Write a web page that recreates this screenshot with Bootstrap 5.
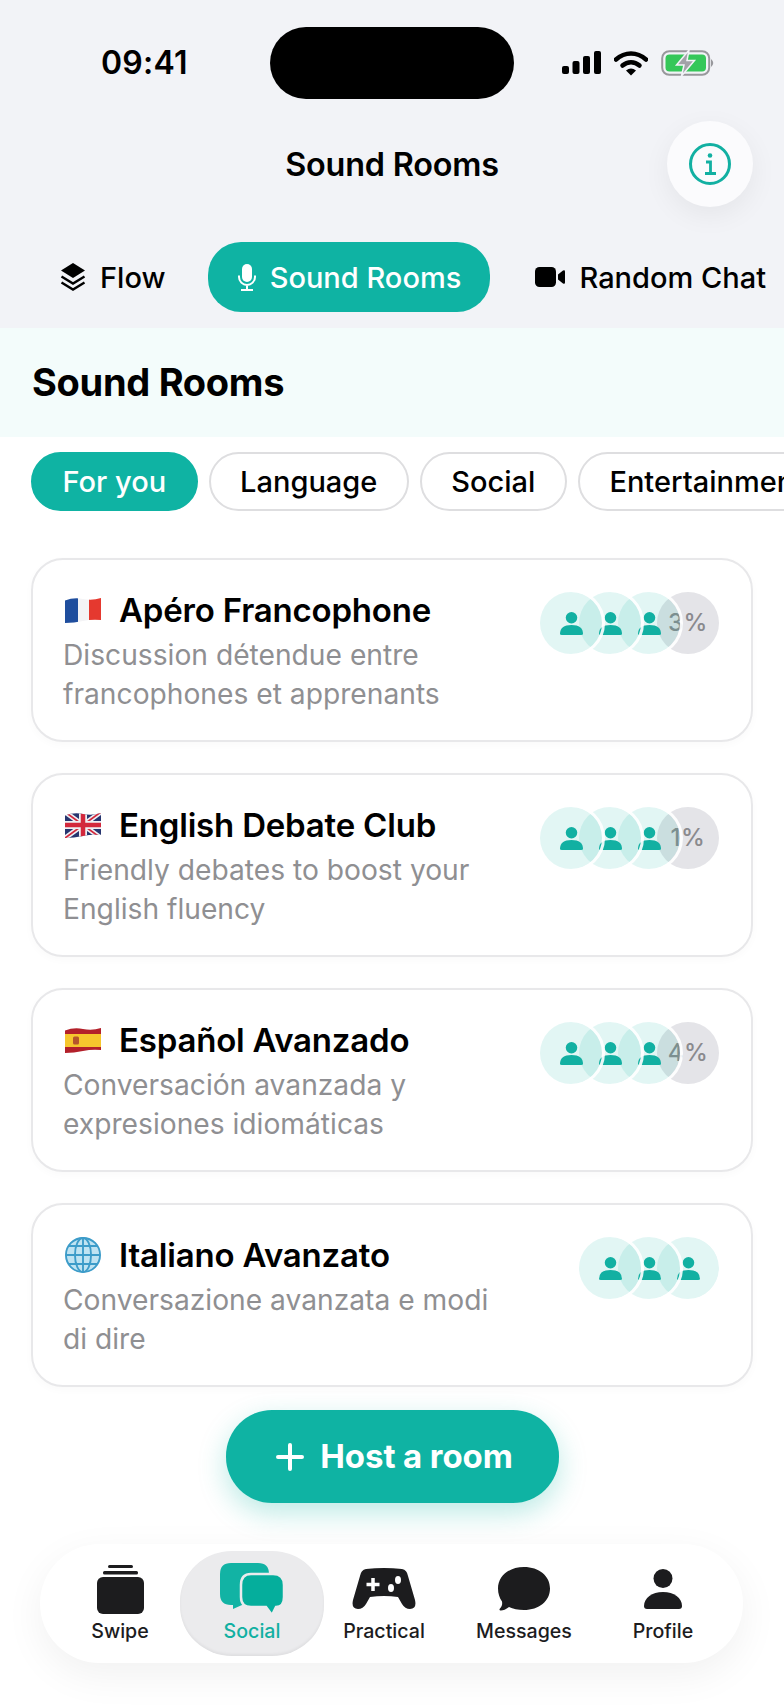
<!DOCTYPE html>
<html lang="en">
<head>
    <meta charset="UTF-8">
    <meta name="viewport" content="width=device-width, initial-scale=1.0">
    <title>Sound Rooms</title>
    <link href="https://cdn.jsdelivr.net/npm/bootstrap@5.3.0/dist/css/bootstrap.min.css" rel="stylesheet">
    <style>
        body { font-family: Inter, "Liberation Sans", sans-serif; background: #fff; color: #000; }
        .phone { width: 784px; height: 1705px; overflow: hidden; background: #fff; }

        /* top grey area */
        .top-area { background: #f2f3f7; height: 328px; padding-top: 27px; }
        .time-box { width: 270px; padding-left: 101px; font-size: 32px; font-weight: 600; line-height: 1; letter-spacing: .2px; }
        .island { width: 244px; height: 72px; background: #000; border-radius: 36px; }
        .status-icons { padding-left: 48px; gap: 13px; }
        .title-row { margin-top: 22px; height: 86px; padding-right: 31px; display: grid; grid-template-columns: 1fr auto 1fr; align-items: center; }
        .page-title { font-size: 32.400px; font-weight: 600; margin: 2px 0 0; padding-left: 31px; line-height: 1; letter-spacing: -.2px; }
        .info-btn { width: 86px; height: 86px; border: 0; padding: 0; border-radius: 50%; background: #fbfbfd; box-shadow: 0 8px 28px rgba(0,0,0,.06); justify-self: end; }
        .tabs-row { margin-top: 35px; height: 70px; padding-left: 60px; white-space: nowrap; overflow: hidden; gap: 0; }
        .tab-item { font-size: 29px; font-weight: 500; line-height: 1; color: #000; gap: 14px; }
        .tab-item svg { flex: none; }
        .tab-active { background: #0fb3a3; color: #fff; height: 70px; width: 282px; border-radius: 33px; margin-left: 43px; margin-right: 45px; justify-content: center; }

        /* section header */
        .sec-head { background: #f3fcfb; height: 109px; padding-left: 32px; }
        .sec-head h1 { font-size: 38px; font-weight: 700; margin: 0; letter-spacing: -.3px; }

        /* filter chips */
        .chip-row { margin-top: 15px; padding-left: 31px; gap: 11px; overflow: hidden; }
        .chip-btn { flex: none; height: 59px; padding: 0 29.500px; border-radius: 30px; border: 2px solid #dedee0; background: #fff; color: #000; font-size: 29px; font-weight: 500; line-height: 1; }
        .chip-btn.chip-on { background: #0fb3a3; border-color: #0fb3a3; color: #fff; }

        /* room cards */
        .room-list { margin: 47px 31px 0; gap: 31px; }
        .room-card { height: 184px; border: 2px solid #e8e8ea; border-radius: 32px; padding: 24px 32px 0 30px; background: #fff; box-shadow: 0 3px 8px rgba(0,0,0,.025); flex-direction: row; justify-content: space-between; align-items: flex-start; }
        .room-text { width: 440px; }
        .room-name { font-size: 33px; font-weight: 600; line-height: 52px; margin: 0; gap: 18px; letter-spacing: -.2px; }
        .room-name svg { flex: none; margin-left: 2px; }
        .room-desc { font-size: 28.200px; line-height: 39px; color: #8f8f92; margin: 0; }
        .avatar-stack { margin-top: 8px; flex: none; }
        .avatar-dot { width: 62px; height: 62px; border-radius: 50%; background: rgba(15,179,163,.12); position: relative; margin-left: -23px; }
        .avatar-dot:first-child { margin-left: 0; }
        .avatar-dot::after { content: ""; position: absolute; inset: -3px; border-radius: 50%; border: 3px solid rgba(255,255,255,.9); clip-path: inset(0 0 0 50%); }
        .avatar-dot:nth-child(1) { z-index: 4; }
        .avatar-dot:nth-child(2) { z-index: 3; }
        .avatar-dot:nth-child(3) { z-index: 2; }
        .avatar-dot:nth-child(4) { z-index: 1; }
        .avatar-pct { background: #e4e4e8; color: #8a8a8e; font-size: 24px; font-weight: 500; letter-spacing: .5px; }
        .avatar-pct::after { display: none; }

        /* host button */
        .host-btn { width: 333px; height: 93px; margin: 23px auto 0; padding: 1px 0 0 5px; border-radius: 46px; border: 0; background: #0fb3a3; color: #fff; font-size: 33px; font-weight: 700; gap: 16px; box-shadow: 0 10px 28px rgba(15,179,163,.28); letter-spacing: -.1px; }
        .host-btn:hover, .host-btn:active { background: #0fb3a3; color: #fff; }

        /* bottom nav */
        .bottom-nav { margin: 41px 41px 0 40px; height: 119px; border-radius: 60px; background: #fff; box-shadow: 0 12px 40px rgba(0,0,0,.06); padding-left: 15px; display: grid; grid-template-columns: 130px 134px 130px 150px 128px; align-items: center; }
        .nav-tile { height: 105px; font-size: 19.600px; font-weight: 500; color: #1c1c1e; line-height: 20px; justify-content: flex-end; padding-bottom: 15px; }
        .nav-tile svg { flex: none; }
        .icon-slot { height: 52px; margin-bottom: 6px; }
        .nav-tile-on { width: 144px; justify-self: center; background: #ebebed; border-radius: 52px / 50px; color: #11b0a2; box-shadow: inset 0 -2px 3px rgba(0,0,0,.05); }
    </style>
</head>
<body>
<div class="phone">

    <div class="top-area">
        <div class="d-flex align-items-center">
            <div class="time-box">09:41</div>
            <div class="island"></div>
            <div class="status-icons d-flex align-items-center">
                <svg width="39" height="24" viewBox="0 0 39 24"><rect x="0" y="15" width="7" height="8" rx="2"/><rect x="10.500" y="10" width="7" height="13" rx="2"/><rect x="21" y="5" width="7" height="18" rx="2"/><rect x="32" y="0" width="7" height="23" rx="2"/></svg>
                <svg width="34" height="25" viewBox="0 0 34 25"><path d="M2 8.500C11 .5 23 .5 32 8.500" fill="none" stroke="#000" stroke-width="4.500" stroke-linecap="round"/><path d="M8.500 14.500C13.500 10 20.500 10 25.500 14.500" fill="none" stroke="#000" stroke-width="4.500" stroke-linecap="round"/><path d="M12 19.500Q17 15.500 22 19.500L17 24.500Z"/></svg>
                <svg width="54" height="26" viewBox="0 0 54 26"><rect x="1.200" y="1.200" width="47" height="23.600" rx="7" fill="none" stroke="#98989c" stroke-width="2"/><rect x="4.500" y="4.500" width="40.500" height="17" rx="4" fill="#35c759"/><path d="M50 9Q54.500 13 50 17Z" fill="#98989c"/><path d="M28 0L15.500 15H23L20.500 26L33.500 10.500H26Z" fill="#a2a2a8" stroke="#f2f3f7" stroke-width="1.500"/></svg>
            </div>
        </div>

        <div class="title-row">
            <span></span>
            <h2 class="page-title">Sound Rooms</h2>
            <button class="info-btn d-flex align-items-center justify-content-center" type="button" aria-label="Info">
                <svg width="44" height="44" viewBox="0 0 44 44" fill="none" stroke="#12b0a2" stroke-width="3"><circle cx="22" cy="22" r="19.500"/><circle cx="22" cy="13.500" r="2.300" fill="#12b0a2" stroke="none"/><path d="M18 20H22.500V31M17 31.500H28" stroke-width="2.800"/></svg>
            </button>
        </div>

        <div class="tabs-row d-flex align-items-center">
            <div class="tab-item d-flex align-items-center">
                <svg width="26" height="28" viewBox="0 0 26 28"><path d="M13 0L25 7.500L13 15L1 7.500Z"/><path d="M1.500 13.500L13 20.500L24.500 13.500M1.500 19.500L13 26.500L24.500 19.500" fill="none" stroke="#000" stroke-width="2.400"/></svg>
                <span>Flow</span>
            </div>
            <div class="tab-item tab-active d-flex align-items-center">
                <svg width="18" height="27" viewBox="0 0 18 27" fill="none" stroke="#fff" stroke-width="2"><rect x="4" y="0" width="10" height="18" rx="5" fill="#fff" stroke="none"/><path d="M1 11.500V13A8 8 0 0 0 17 13V11.500M9 21V26M3 26H15"/></svg>
                <span>Sound Rooms</span>
            </div>
            <div class="tab-item d-flex align-items-center">
                <svg width="30" height="20" viewBox="0 0 30 20"><rect x="0" y="0" width="21" height="20" rx="4.500"/><path d="M23 7.500L28 3.500Q30 2.500 30 4.500V15.500Q30 17.500 28 16.500L23 12.500Z"/></svg>
                <span>Random Chat</span>
            </div>
        </div>
    </div>

    <div class="sec-head d-flex align-items-center">
        <h1>Sound Rooms</h1>
    </div>

    <div class="chip-row d-flex">
        <button class="btn chip-btn chip-on" type="button">For you</button>
        <button class="btn chip-btn" type="button">Language</button>
        <button class="btn chip-btn" type="button">Social</button>
        <button class="btn chip-btn" type="button">Entertainment</button>
    </div>

    <svg width="0" height="0" class="d-block">
        <defs>
            <symbol id="person" viewBox="0 0 24 24"><circle cx="12" cy="6" r="6"/><path d="M0 23Q0 13.500 12 13.500T24 23Q24 24 22 24H2Q0 24 0 23Z"/></symbol>
            <clipPath id="wave"><path d="M0 3.500Q9 0 18 2T36 1V23Q27 22 18 24T0 26Z"/></clipPath>
        </defs>
    </svg>

    <div class="room-list d-flex flex-column">
        <div class="card room-card">
            <div class="room-text">
                <h3 class="room-name d-flex align-items-center">
                    <svg width="36" height="26" viewBox="0 0 36 26"><g clip-path="url(#wave)"><rect width="13" height="26" fill="#1f4e9e"/><rect x="13" width="11" height="26" fill="#f4f4f6"/><rect x="24" width="12" height="26" fill="#e5392f"/></g></svg>
                    <span>Apéro Francophone</span>
                </h3>
                <p class="room-desc">Discussion détendue entre francophones et apprenants</p>
            </div>
            <div class="avatar-stack d-flex">
                <div class="avatar-dot d-flex align-items-center justify-content-center"><svg width="23" height="23" fill="#12b0a2"><use href="#person"/></svg></div>
                <div class="avatar-dot d-flex align-items-center justify-content-center"><svg width="23" height="23" fill="#12b0a2"><use href="#person"/></svg></div>
                <div class="avatar-dot d-flex align-items-center justify-content-center"><svg width="23" height="23" fill="#12b0a2"><use href="#person"/></svg></div>
                <div class="avatar-dot avatar-pct d-flex align-items-center justify-content-center">3%</div>
            </div>
        </div>

        <div class="card room-card">
            <div class="room-text">
                <h3 class="room-name d-flex align-items-center">
                    <svg width="36" height="26" viewBox="0 0 36 26"><g clip-path="url(#wave)"><rect width="36" height="26" fill="#27356f"/><path d="M0 0L36 26M36 0L0 26" stroke="#eef0f4" stroke-width="5"/><path d="M0 0L36 26M36 0L0 26" stroke="#d3283c" stroke-width="1.800"/><path d="M18 0V26M0 13H36" stroke="#eef0f4" stroke-width="8"/><path d="M18 0V26M0 13H36" stroke="#d3283c" stroke-width="4.500"/></g></svg>
                    <span>English Debate Club</span>
                </h3>
                <p class="room-desc">Friendly debates to boost your English fluency</p>
            </div>
            <div class="avatar-stack d-flex">
                <div class="avatar-dot d-flex align-items-center justify-content-center"><svg width="23" height="23" fill="#12b0a2"><use href="#person"/></svg></div>
                <div class="avatar-dot d-flex align-items-center justify-content-center"><svg width="23" height="23" fill="#12b0a2"><use href="#person"/></svg></div>
                <div class="avatar-dot d-flex align-items-center justify-content-center"><svg width="23" height="23" fill="#12b0a2"><use href="#person"/></svg></div>
                <div class="avatar-dot avatar-pct d-flex align-items-center justify-content-center">1%</div>
            </div>
        </div>

        <div class="card room-card">
            <div class="room-text">
                <h3 class="room-name d-flex align-items-center">
                    <svg width="36" height="26" viewBox="0 0 36 26"><g clip-path="url(#wave)"><rect width="36" height="26" fill="#b3202a"/><rect y="7" width="36" height="13" fill="#f6c62d"/><rect x="8" y="9.500" width="6" height="8" rx="1.500" fill="#b5562c"/></g></svg>
                    <span>Español Avanzado</span>
                </h3>
                <p class="room-desc">Conversación avanzada y expresiones idiomáticas</p>
            </div>
            <div class="avatar-stack d-flex">
                <div class="avatar-dot d-flex align-items-center justify-content-center"><svg width="23" height="23" fill="#12b0a2"><use href="#person"/></svg></div>
                <div class="avatar-dot d-flex align-items-center justify-content-center"><svg width="23" height="23" fill="#12b0a2"><use href="#person"/></svg></div>
                <div class="avatar-dot d-flex align-items-center justify-content-center"><svg width="23" height="23" fill="#12b0a2"><use href="#person"/></svg></div>
                <div class="avatar-dot avatar-pct d-flex align-items-center justify-content-center">4%</div>
            </div>
        </div>

        <div class="card room-card">
            <div class="room-text">
                <h3 class="room-name d-flex align-items-center">
                    <svg width="36" height="38" viewBox="0 0 38 38"><circle cx="19" cy="19" r="18.500" fill="#bfe3f2"/><g fill="none" stroke="#3d9cc9" stroke-width="2"><circle cx="19" cy="19" r="18"/><ellipse cx="19" cy="19" rx="8.500" ry="18"/><path d="M19 1V37M1 19H37M4 9.500H34M4 28.500H34"/></g></svg>
                    <span>Italiano Avanzato</span>
                </h3>
                <p class="room-desc">Conversazione avanzata e modi di dire</p>
            </div>
            <div class="avatar-stack d-flex">
                <div class="avatar-dot d-flex align-items-center justify-content-center"><svg width="23" height="23" fill="#12b0a2"><use href="#person"/></svg></div>
                <div class="avatar-dot d-flex align-items-center justify-content-center"><svg width="23" height="23" fill="#12b0a2"><use href="#person"/></svg></div>
                <div class="avatar-dot d-flex align-items-center justify-content-center"><svg width="23" height="23" fill="#12b0a2"><use href="#person"/></svg></div>
            </div>
        </div>
    </div>

    <button class="btn host-btn d-flex align-items-center justify-content-center" type="button">
        <svg width="28" height="28" viewBox="0 0 28 28" fill="none" stroke="#fff" stroke-width="4" stroke-linecap="round"><path d="M14 2V26M2 14H26"/></svg>
        <span>Host a room</span>
    </button>

    <div class="bottom-nav">
        <div class="nav-tile d-flex flex-column align-items-center">
            <div class="icon-slot d-flex align-items-center justify-content-center">
                <svg width="47" height="49" viewBox="0 0 47 49" fill="#1c1c1e"><rect x="11" y="0" width="25" height="3" rx="1.500"/><rect x="6" y="6" width="35" height="3.500" rx="1.500"/><rect x="0" y="12" width="47" height="37" rx="6"/></svg>
            </div>
            <span>Swipe</span>
        </div>
        <div class="nav-tile nav-tile-on d-flex flex-column align-items-center">
            <div class="icon-slot d-flex align-items-center justify-content-center">
                <svg width="64" height="52" viewBox="0 0 64 52"><path d="M11 0H38Q49 0 49 11V31Q49 42 38 42H22L13 46V42H11Q0 42 0 31V11Q0 0 11 0Z" fill="#12b3a4"/><path d="M31 11H53Q64 11 64 22V34Q64 44 56 44L52 52L46 44H31Q21 44 21 34V22Q21 11 31 11Z" fill="#05ae9c" stroke="#ebebed" stroke-width="2.500"/></svg>
            </div>
            <span>Social</span>
        </div>
        <div class="nav-tile d-flex flex-column align-items-center">
            <div class="icon-slot d-flex align-items-center justify-content-center">
                <svg width="64" height="42" viewBox="0 0 64 42"><path d="M14 1Q32 -1 50 1Q55 2 56 8L63 32Q65 41 58 41Q53 41 50 36L46 29Q32 27 18 29L14 36Q11 41 6 41Q-1 41 1 32L8 8Q9 2 14 1Z" fill="#1c1c1e"/><path d="M21 10V23M14.500 16.500H27.500" stroke="#fff" stroke-width="3.500"/><ellipse cx="39" cy="20" rx="3" ry="4" fill="#fff"/><ellipse cx="46" cy="12" rx="3" ry="4" fill="#fff"/></svg>
            </div>
            <span>Practical</span>
        </div>
        <div class="nav-tile d-flex flex-column align-items-center">
            <div class="icon-slot d-flex align-items-center justify-content-center">
                <svg width="52" height="44" viewBox="0 0 52 44"><path d="M26 0C41 0 52 9 52 21.500S41 43 26 43C20 43 15 42 11 40C8 42.500 5 43.500 3 43.500C1.500 43.500 1 42.500 2 41.500C4 39.500 4.500 37 4 34.500C1.500 31 0 26.500 0 21.500C0 9 11 0 26 0Z" fill="#1c1c1e"/></svg>
            </div>
            <span>Messages</span>
        </div>
        <div class="nav-tile d-flex flex-column align-items-center">
            <div class="icon-slot d-flex align-items-center justify-content-center">
                <svg width="38" height="40" viewBox="0 0 38 40" fill="#1c1c1e"><ellipse cx="19" cy="9.500" rx="9.500" ry="9.500"/><path d="M0 37C0 29 8 23 19 23S38 29 38 37Q38 40 35 40H3Q0 40 0 37Z"/></svg>
            </div>
            <span>Profile</span>
        </div>
    </div>
</div>

<script src="https://cdn.jsdelivr.net/npm/bootstrap@5.3.0/dist/js/bootstrap.bundle.min.js"></script>
</body>
</html>
